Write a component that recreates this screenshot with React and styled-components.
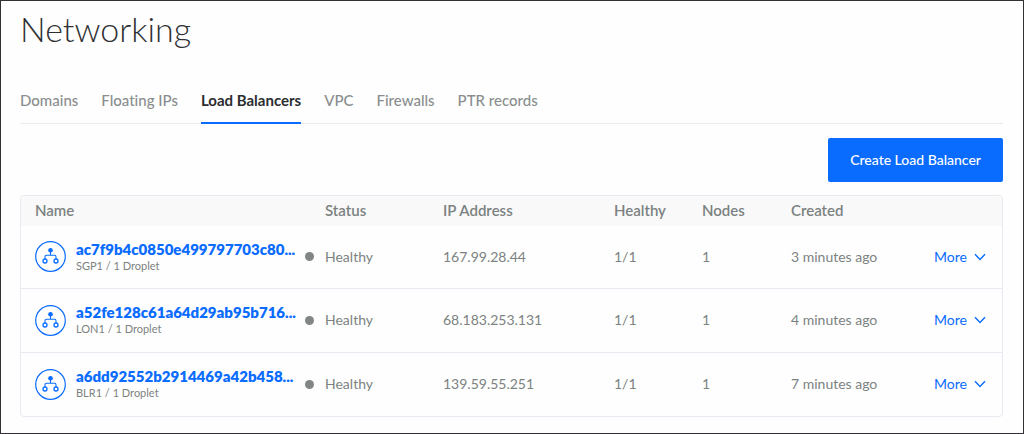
import React from "react";
import styled, { createGlobalStyle } from "styled-components";

const blue = "#0a6cff";
const grey = "#7c8281";
const line = "#e9e9f1";

const GlobalStyle = createGlobalStyle`
  *, *::before, *::after { box-sizing: border-box; }
  body {
    margin: 0;
    background: #fefefe;
    color: ${grey};
    font-family: Lato, "Open Sans", sans-serif;
    font-size: 14px;
    font-variant-ligatures: none;
    line-height: 20px;
  }
`;

const Page = styled.main`
  min-height: 100vh;
  padding: 6px 20px 16px 19px;
  border: 1px solid #333136;
`;

const Title = styled.h1`
  margin: 0;
  color: #2e3133;
  font-size: 34px;
  font-weight: 300;
  line-height: 44px;
`;

const Tabs = styled.nav`
  display: flex;
  gap: 23px;
  margin-top: 30px;
  border-bottom: 1px solid #ebebeb;
`;

const Tab = styled.a`
  margin-bottom: -1px;
  padding: 9px 0 12px;
  border-bottom: 2px solid ${(p) => (p.$active ? blue : "transparent")};
  color: ${(p) => (p.$active ? "#2b2d30" : "#8a8e8e")};
  font-size: 15px;
  font-weight: ${(p) => (p.$active ? 700 : 500)};
  text-decoration: none;
`;

const Actions = styled.div`
  display: flex;
  justify-content: flex-end;
  padding: 14px 0 13px;
`;

const CreateButton = styled.button`
  height: 44px;
  padding: 0 22px;
  border: 0;
  border-radius: 2px;
  background: ${blue};
  color: #fff;
  font: inherit;
  font-weight: 500;
  cursor: pointer;
`;

const Card = styled.section`
  overflow: hidden;
  border: 1px solid ${line};
  border-radius: 4px;
`;

const Table = styled.table`
  width: 100%;
  table-layout: fixed;
  border-collapse: collapse;
`;

const Column = styled.col`
  width: ${(p) => (p.$width ? `${p.$width}px` : "auto")};
`;

const HeadCell = styled.th`
  height: 30px;
  padding: 0 0 2px ${(p) => p.$indent || 0}px;
  background: #f9f9f9;
  font-size: 15px;
  font-weight: 600;
  text-align: left;
`;

const Row = styled.tr`
  height: 64px;
  &:first-child { height: 62px; }
  & + & td { border-top: 1px solid ${line}; }
`;

const Cell = styled.td`
  padding: 0 0 0 ${(p) => p.$indent || 0}px;
  white-space: nowrap;
`;

const Resource = styled.div`
  display: flex;
  align-items: center;
  gap: 10px;
`;

const ResourceIcon = styled.svg`
  flex: none;
  width: 31px;
  height: 31px;
`;

const ResourceLink = styled.a`
  display: block;
  color: ${blue};
  font-size: 15px;
  font-weight: 800;
  line-height: 17px;
  text-decoration: none;
`;

const ResourceMeta = styled.div`
  font-size: 11px;
  line-height: 15px;
`;

const Status = styled.div`
  display: flex;
  align-items: center;
  gap: 11px;
`;

const Dot = styled.span`
  width: 9px;
  height: 9px;
  border-radius: 50%;
  background: #818685;
`;

const MoreButton = styled.button`
  display: flex;
  align-items: center;
  gap: 7px;
  margin-left: auto;
  padding: 0 16px 0 0;
  border: 0;
  background: none;
  color: ${blue};
  font: inherit;
  cursor: pointer;
`;

const columns = [
  { label: "Name", indent: 14 },
  { label: "Status", width: 138, indent: 20 },
  { label: "IP Address", width: 171 },
  { label: "Healthy", width: 88 },
  { label: "Nodes", width: 89 },
  { label: "Created", width: 112 },
  { label: "", width: 99 },
];

const balancers = [
  { name: "ac7f9b4c0850e499797703c80...", region: "SGP1", ip: "167.99.28.44", created: "3 minutes ago" },
  { name: "a52fe128c61a64d29ab95b716...", region: "LON1", ip: "68.183.253.131", created: "4 minutes ago" },
  { name: "a6dd92552b2914469a42b458...", region: "BLR1", ip: "139.59.55.251", created: "7 minutes ago" },
];

const tabs = ["Domains", "Floating IPs", "Load Balancers", "VPC", "Firewalls", "PTR records"];

function BalancerIcon() {
  return (
    <ResourceIcon viewBox="0 0 31 31" fill="none" stroke={blue} aria-hidden="true">
      <circle cx="15.5" cy="15.5" r="14.8" strokeWidth="1.2" />
      <circle cx="15.5" cy="9.3" r="2.3" fill={blue} stroke="none" />
      <path d="M15.5 11v3.3M10 18v-2.2q0-1.5 1.5-1.5h8q1.5 0 1.5 1.5V18" strokeWidth="1.1" />
      <circle cx="10" cy="20" r="2" strokeWidth="1.3" />
      <circle cx="21" cy="20" r="2" strokeWidth="1.3" />
    </ResourceIcon>
  );
}

function Chevron() {
  return (
    <svg width="12" height="8" viewBox="0 0 12 8" fill="none" stroke={blue} strokeWidth="1.4" aria-hidden="true">
      <path d="M1 1.2 6 6.4 11 1.2" />
    </svg>
  );
}

export default function App() {
  return (
    <>
      <GlobalStyle />
      <Page>
        <Title>Networking</Title>
        <Tabs>
          {tabs.map((tab) => (
            <Tab key={tab} href="#" $active={tab === "Load Balancers"}>{tab}</Tab>
          ))}
        </Tabs>
        <Actions>
          <CreateButton type="button">Create Load Balancer</CreateButton>
        </Actions>
        <Card>
          <Table>
            <colgroup>
              {columns.map((c) => <Column key={c.label} $width={c.width} />)}
            </colgroup>
            <thead>
              <tr>
                {columns.map((c) => (
                  <HeadCell key={c.label} scope="col" $indent={c.indent}>{c.label}</HeadCell>
                ))}
              </tr>
            </thead>
            <tbody>
              {balancers.map((b) => (
                <Row key={b.name}>
                  <Cell $indent={14}>
                    <Resource>
                      <BalancerIcon />
                      <div>
                        <ResourceLink href="#">{b.name}</ResourceLink>
                        <ResourceMeta>{b.region} / 1 Droplet</ResourceMeta>
                      </div>
                    </Resource>
                  </Cell>
                  <Cell><Status><Dot />Healthy</Status></Cell>
                  <Cell>{b.ip}</Cell>
                  <Cell>1/1</Cell>
                  <Cell>1</Cell>
                  <Cell>{b.created}</Cell>
                  <Cell><MoreButton type="button">More<Chevron /></MoreButton></Cell>
                </Row>
              ))}
            </tbody>
          </Table>
        </Card>
      </Page>
    </>
  );
}
